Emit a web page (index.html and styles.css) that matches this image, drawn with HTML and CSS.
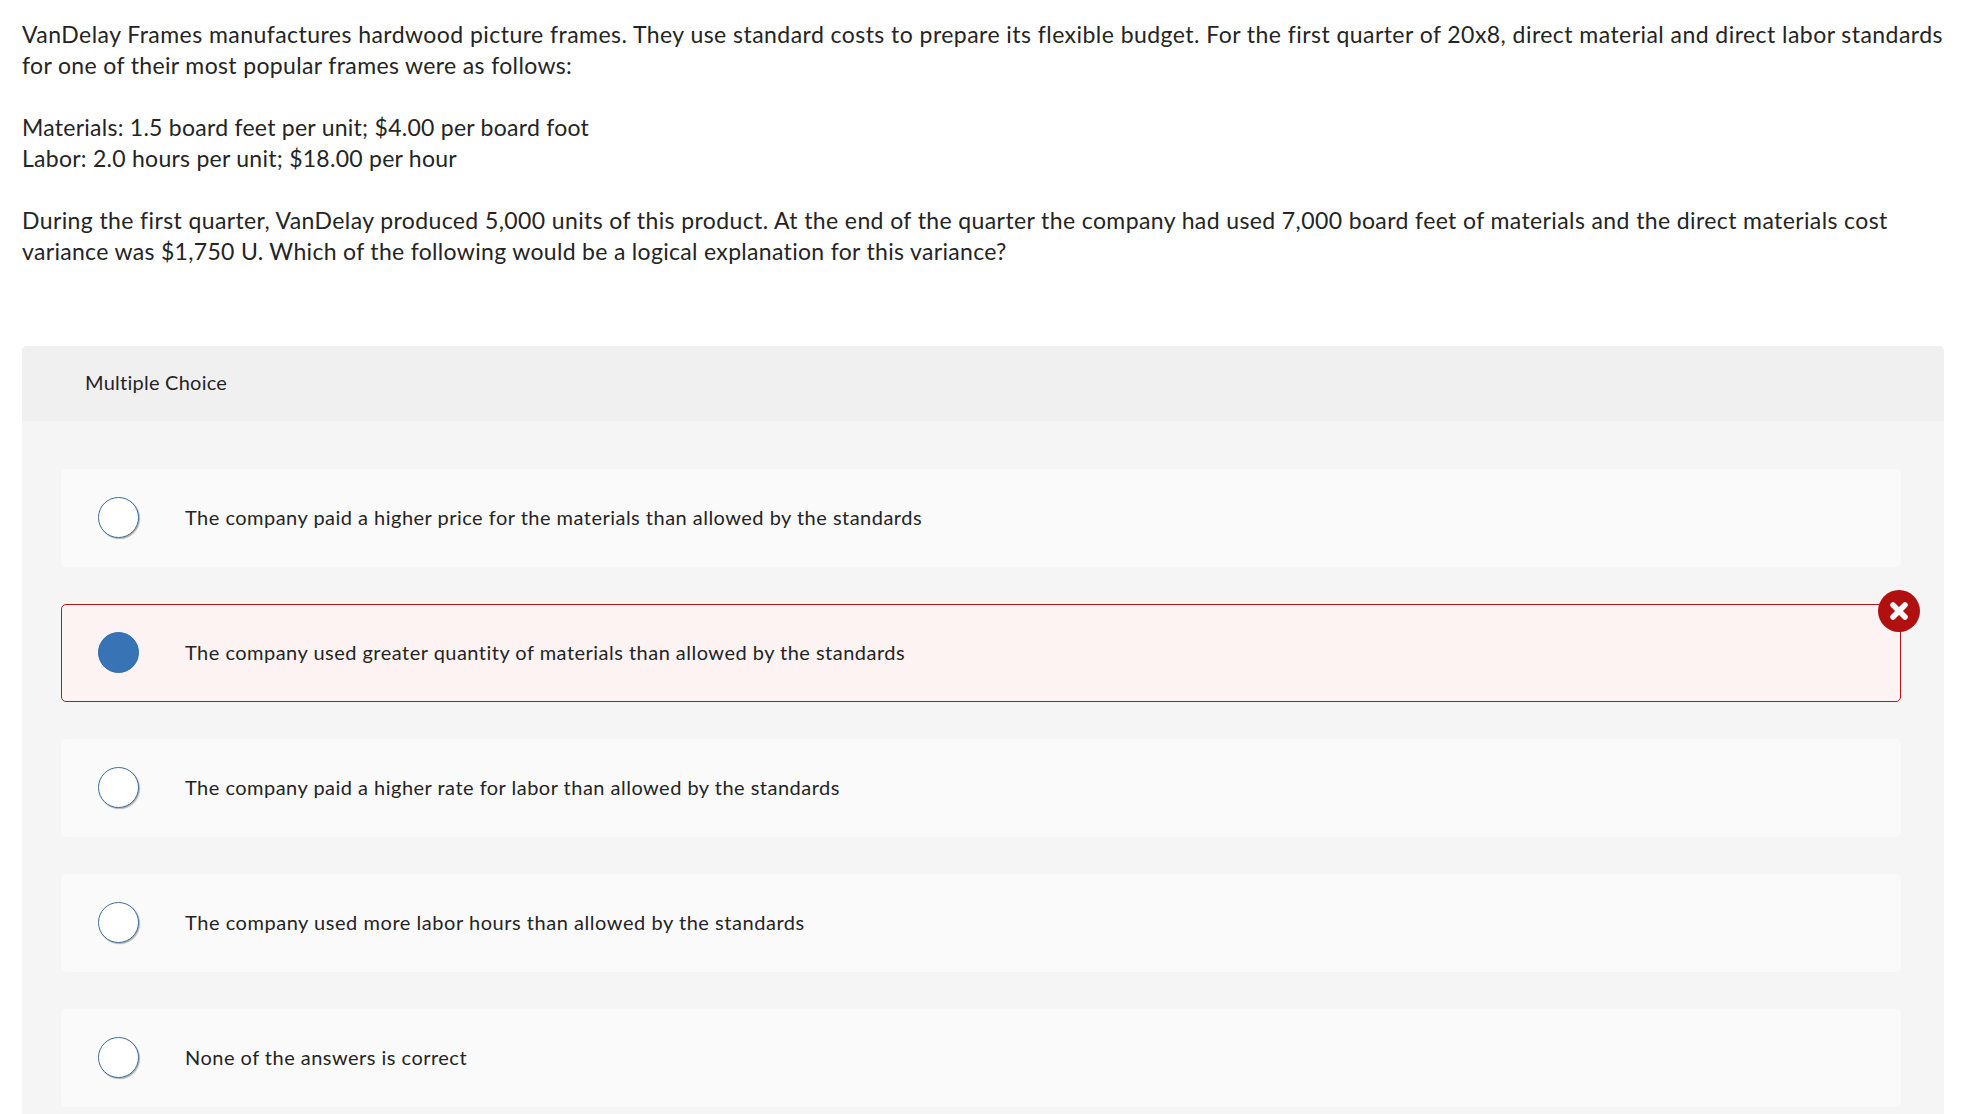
FILE: index.html
```html
<!DOCTYPE html>
<html lang="en">
<head>
<meta charset="utf-8">
<title>Multiple Choice</title>
<link rel="stylesheet" href="styles.css">
</head>
<body>
<main class="page">
  <section class="prompt">
    <p><span class="line-a">VanDelay Frames manufactures hardwood picture frames. They use standard costs to prepare its flexible budget. For the first quarter of 20x8, direct material and direct labor standards</span><br><span class="line-b">for one of their most popular frames were as follows:</span></p>
    <p><span class="line-c">Materials: 1.5 board feet per unit; $4.00 per board foot</span><br><span class="line-c">Labor: 2.0 hours per unit; $18.00 per hour</span></p>
    <p><span class="line-d">During the first quarter, VanDelay produced 5,000 units of this product. At the end of the quarter the company had used 7,000 board feet of materials and the direct materials cost</span><br><span class="line-e">variance was $1,750 U. Which of the following would be a logical explanation for this variance?</span></p>
  </section>
  <section class="panel">
    <header class="panel-head">Multiple Choice</header>
    <div class="choices">
      <div class="choice"><span class="radio"></span><span class="label">The company paid a higher price for the materials than allowed by the standards</span></div>
      <div class="choice wrong"><span class="radio on"></span><span class="label">The company used greater quantity of materials than allowed by the standards</span>
        <span class="badge"><svg viewBox="0 0 42 42" width="42" height="42" aria-hidden="true"><path d="M15 15 L27 27 M27 15 L15 27" stroke="#fff" stroke-width="5.5" stroke-linecap="round" fill="none"/></svg></span>
      </div>
      <div class="choice"><span class="radio"></span><span class="label">The company paid a higher rate for labor than allowed by the standards</span></div>
      <div class="choice"><span class="radio"></span><span class="label label-wide">The company used more labor hours than allowed by the standards</span></div>
      <div class="choice"><span class="radio"></span><span class="label">None of the answers is correct</span></div>
    </div>
  </section>
</main>
</body>
</html>
```
FILE: styles.css
```css
html, body {
  margin: 0;
  height: 1114px;
  overflow: hidden;
  background: #fff;
}
body {
  font-family: "Lato", "Open Sans", sans-serif;
  color: #242424;
}
.page {
  width: 1922px;
  padding: 19px 0 0 22px;
}
.prompt {
  height: 327px;
  font-size: 23px;
  line-height: 31.4px;
}
.prompt p {
  margin: 0 0 30px;
  white-space: nowrap;
}
.line-a { letter-spacing: 0.45px; }
.line-b { letter-spacing: 0.36px; }
.line-c { letter-spacing: 0.26px; }
.line-d { letter-spacing: 0.39px; }
.line-e { letter-spacing: 0.32px; }
.panel {
  background: #f5f5f5;
  border-radius: 5px 5px 0 0;
  padding-bottom: 40px;
}
.panel-head {
  box-sizing: border-box;
  height: 75px;
  display: flex;
  align-items: center;
  padding: 0 0 3px 63px;
  background: #f0f0f0;
  border-radius: 5px 5px 0 0;
  font-size: 20px;
  letter-spacing: 0.25px;
}
.choices {
  display: flex;
  flex-direction: column;
  gap: 37px;
  padding: 48px 43px 0 39px;
}
.choice {
  position: relative;
  box-sizing: border-box;
  height: 98px;
  display: flex;
  align-items: center;
  padding-left: 37px;
  background: #fafafa;
  border-radius: 5px;
}
.choice.wrong {
  background: #fdf3f3;
  border: 1px solid #b81616;
  padding-left: 36px;
}
.radio {
  box-sizing: border-box;
  flex: none;
  width: 41px;
  height: 41px;
  margin-bottom: 1px;
  border: 1.5px solid #3c6d9c;
  border-radius: 50%;
  background: #fff;
  box-shadow: 1px 1px 1px rgba(60, 60, 60, 0.4);
}
.radio.on {
  background: #3873b5;
  border-color: #2d6cb0;
  box-shadow: none;
}
.label {
  margin-left: 46px;
  padding-bottom: 2px;
  font-size: 20px;
  letter-spacing: 0.48px;
}
.label-wide {
  letter-spacing: 0.54px;
}
.badge {
  position: absolute;
  top: -15px;
  right: -20px;
  width: 42px;
  height: 42px;
  border-radius: 50%;
  background: #b11010;
  display: block;
}
.badge svg {
  display: block;
}
```
